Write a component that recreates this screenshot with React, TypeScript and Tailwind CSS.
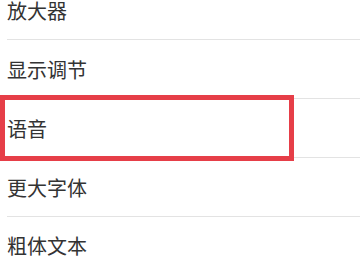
import React from 'react';

const ITEMS = ['放大器', '显示调节', '语音', '更大字体', '粗体文本'];

const App = () => {
  return (
    <div
      className="relative w-[360px] h-[270px] overflow-hidden bg-white"
      style={{ fontFamily: '"Noto Sans CJK SC", "Noto Sans", sans-serif' }}
    >
      <div className="-mt-[18.5px] flex flex-col">
        {ITEMS.map((label) => (
          <div
            key={label}
            className="ml-[7px] h-[58.75px] pt-[2px] flex items-center border-b border-[#e3e3e3] text-[20px] text-[#333333]"
          >
            {label}
          </div>
        ))}
      </div>
      {/* highlight box */}
      <div className="absolute left-0 top-[95px] w-[294px] h-[66px] border-[5px] border-[#e63e48] pointer-events-none" />
    </div>
  );
};

export default App;
